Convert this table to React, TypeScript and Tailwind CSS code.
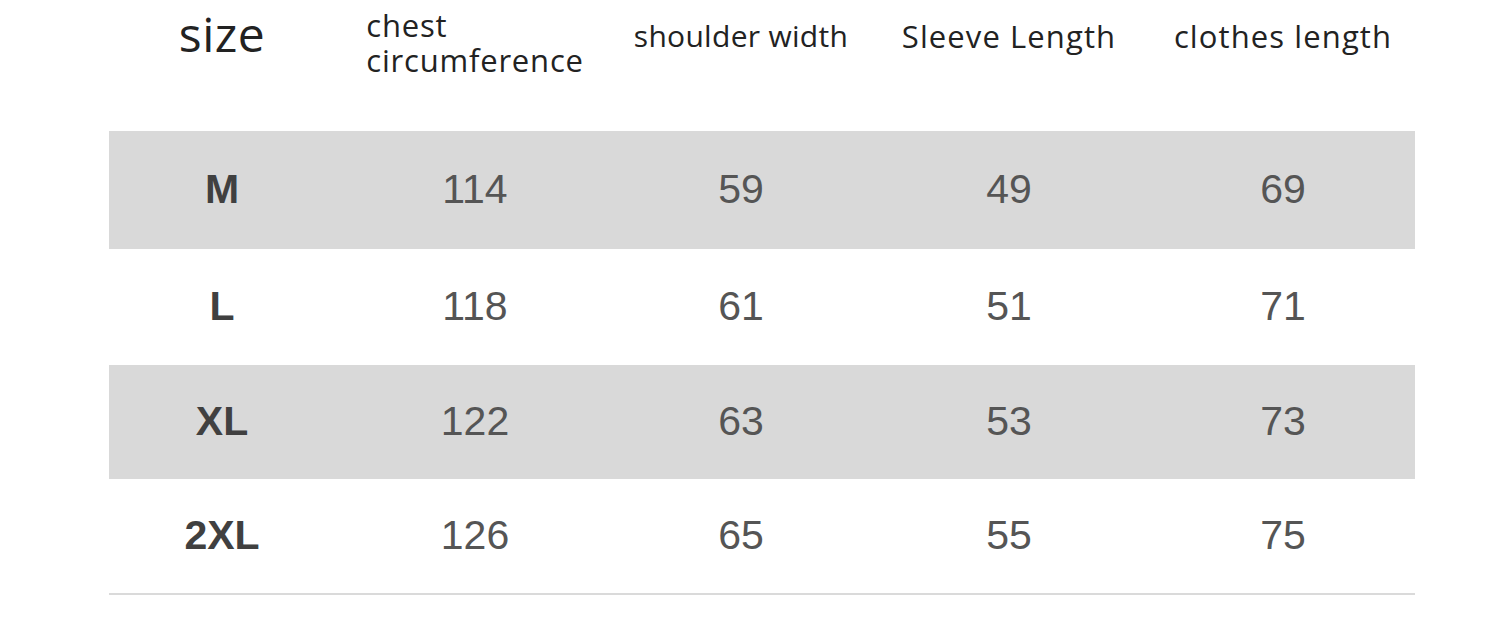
const rows = [
  ["M", "114", "59", "49", "69"],
  ["L", "118", "61", "51", "71"],
  ["XL", "122", "63", "53", "73"],
  ["2XL", "126", "65", "55", "75"],
];

const cols = "grid grid-cols-[226px_280px_252px_284px_264px]";

export default function App() {
  return (
    <div className="w-[1512px] h-[629px] bg-white pl-[109px] font-['Open_Sans',sans-serif]">
      <div className={`${cols} h-[131px] items-start text-[#222]`}>
        <div className="flex justify-center pt-[6px] text-[48px] leading-[56px] tracking-[0.5px]">size</div>
        <div className="flex justify-center pt-[8px] text-[31px] leading-[35px] tracking-[0.8px]">
          <div className="text-left">
            chest
            <br />
            circumference
          </div>
        </div>
        <div className="flex justify-center pt-[16px] text-[30px] leading-[40px] tracking-[0.3px]">shoulder width</div>
        <div className="flex justify-center pt-[16px] text-[31px] leading-[40px] tracking-[1.1px]">Sleeve Length</div>
        <div className="flex justify-center pt-[16px] text-[31px] leading-[40px] tracking-[1.1px]">clothes length</div>
      </div>
      <div className="w-[1306px] border-b-2 border-[#dadada] font-['Liberation_Sans',sans-serif]">
        {rows.map((r, i) => (
          <div
            key={r[0]}
            className={`${cols} items-center ${i % 2 === 0 ? "bg-[#d9d9d9]" : "bg-white"} ${
              i === 0 ? "h-[118px]" : i === 1 ? "h-[116px]" : "h-[114px]"
            }`}
          >
            {r.map((c, j) => (
              <div
                key={j}
                className={`text-center text-[41px] ${j === 0 ? "font-bold text-[#404040]" : "text-[#555]"}`}
              >
                {c}
              </div>
            ))}
          </div>
        ))}
      </div>
    </div>
  );
}
